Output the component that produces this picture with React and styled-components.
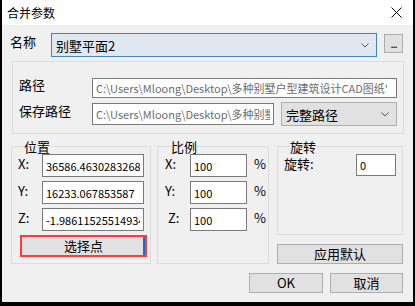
import React from "react";
import styled, { createGlobalStyle } from "styled-components";

const GlobalStyle = createGlobalStyle`
  body {
    margin: 0;
    background: #fff;
  }
  * {
    box-sizing: border-box;
  }
`;

const FONT = `"Noto Sans CJK SC", "Noto Sans", sans-serif`;

const Window = styled.div`
  width: 415px;
  height: 306px;
  border: solid #000;
  border-width: 0 2px 4px 2px;
  display: flex;
  flex-direction: column;
  font-family: ${FONT};
  color: #000;
`;

const TitleBar = styled.div`
  height: 25px;
  flex: none;
  background: #fff;
  display: flex;
  align-items: center;
  justify-content: space-between;
  padding: 0 11px 0 5px;
  font-size: 12px;
  line-height: 12px;
`;

const Body = styled.div`
  flex: 1;
  background: #f0f0f0;
  padding: 8px 10px 0 8px;
  display: flex;
  flex-direction: column;
`;

const NameRow = styled.div`
  display: flex;
  align-items: flex-start;
  height: 24px;
`;

const Label = styled.div`
  width: ${(p) => p.$w || 24}px;
  flex: none;
  font-size: 13px;
  line-height: 13px;
  margin-top: ${(p) => p.$top || 0}px;
  padding-left: ${(p) => p.$indent || 0}px;
  white-space: nowrap;
`;

const Combo = styled.div`
  width: ${(p) => p.$w}px;
  height: 24px;
  flex: none;
  display: flex;
  align-items: center;
  justify-content: space-between;
  padding: 0 7px 0 4px;
  font-size: 13px;
  background: ${(p) => (p.$active ? "#e1e8ef" : "#e1e1e1")};
  border: 1px solid ${(p) => (p.$active ? "#3c86c6" : "#adadad")};
`;

const DotsButton = styled.div`
  width: 19px;
  height: 19px;
  margin: 1px 0 0 7px;
  border: 1px solid #adadad;
  background: #e1e1e1;
  font-size: 11px;
  line-height: 17px;
  text-align: center;
  letter-spacing: -1px;
`;

const PathGroup = styled.div`
  height: 73px;
  margin: 4px -1px 0 2px;
  border: 1px solid #dcdcdc;
  padding: 16px 0 0 6px;
`;

const PathRow = styled.div`
  display: flex;
  align-items: flex-start;
  margin-top: ${(p) => p.$mt || 0}px;
`;

const Field = styled.input`
  width: ${(p) => p.$w}px;
  height: ${(p) => p.$h || 23}px;
  flex: none;
  margin: ${(p) => p.$mt || 0}px 0 0 0;
  border: 1px solid #7a7a7a;
  background: #fff;
  padding: 0 3px;
  font-family: ${FONT};
  font-size: 11px;
  color: ${(p) => (p.$muted ? "#6d6d6d" : "#000")};
  outline: none;
`;

const Lower = styled.div`
  display: flex;
  margin-top: 6px;
`;

const Group = styled.fieldset`
  margin: 0 0 0 ${(p) => p.$ml || 0}px;
  padding: 1px 0 0 ${(p) => p.$pl || 6}px;
  width: ${(p) => p.$w}px;
  height: ${(p) => p.$h}px;
  border: 1px solid #dcdcdc;
  min-width: 0;
  flex: none;
`;

const Legend = styled.legend`
  margin-left: 6px;
  padding: 0;
  font-size: 13px;
  line-height: 13px;
`;

const FieldRow = styled.div`
  display: flex;
  align-items: flex-start;
  height: 23px;
  margin-bottom: 4px;
`;

const Percent = styled.div`
  margin: 3px 0 0 7px;
  font-size: 13px;
  line-height: 13px;
`;

const PickButton = styled.div`
  width: 127px;
  height: 22px;
  margin: 1px 0 0 2px;
  border: 2px solid #ff3b3b;
  background: #e1e1e1;
  box-shadow: inset -2px 0 0 #0078d7;
  font-size: 13px;
  line-height: 17px;
  text-align: center;
`;

const RightCol = styled.div`
  display: flex;
  flex-direction: column;
  margin-left: 8px;
  width: 126px;
`;

const GreyButton = styled.div`
  width: ${(p) => p.$w}px;
  height: 20px;
  margin-top: ${(p) => p.$mt || 0}px;
  border: 1px solid #adadad;
  background: #e1e1e1;
  font-size: 13px;
  line-height: 17px;
  text-align: center;
`;

const Footer = styled.div`
  display: flex;
  justify-content: flex-end;
  gap: 7px;
  margin-top: 9px;
`;

const Chevron = () => (
  <svg width="8" height="5" viewBox="0 0 8 5">
    <polyline points="0.5,0.5 4,4 7.5,0.5" fill="none" stroke="#555" strokeWidth="1" />
  </svg>
);

const CloseIcon = () => (
  <svg width="11" height="11" viewBox="0 0 11 11">
    <path d="M0.5 0.5 L10.5 10.5 M10.5 0.5 L0.5 10.5" stroke="#000" strokeWidth="1" />
  </svg>
);

const pos = [
  ["X:", "36586.4630283268"],
  ["Y:", "16233.067853587"],
  ["Z:", "-1.98611525514934"],
];

export default function App() {
  return (
    <>
      <GlobalStyle />
      <Window>
        <TitleBar>
          <span>合并参数</span>
          <CloseIcon />
        </TitleBar>
        <Body>
          <NameRow>
            <Label $w={41} $top={2}>名称</Label>
            <Combo $w={326} $active>
              <span>别墅平面2</span>
              <Chevron />
            </Combo>
            <DotsButton>...</DotsButton>
          </NameRow>

          <PathGroup>
            <PathRow>
              <Label $w={73}>路径</Label>
              <Field
                $w={305}
                $h={20}
                $muted
                readOnly
                value="C:\Users\Mloong\Desktop\多种别墅户型建筑设计CAD图纸'"
              />
            </PathRow>
            <PathRow $mt={4}>
              <Label $w={73} $top={2}>保存路径</Label>
              <Field
                $w={182}
                $h={22}
                $mt={1}
                $muted
                readOnly
                value="C:\Users\Mloong\Desktop\多种别墅户型建筑设计"
              />
              <Combo $w={116} style={{ marginLeft: 7 }}>
                <span>完整路径</span>
                <Chevron />
              </Combo>
            </PathRow>
          </PathGroup>

          <Lower>
            <Group $ml={1} $w={140} $h={124}>
              <Legend>位置</Legend>
              {pos.map(([k, v]) => (
                <FieldRow key={k}>
                  <Label $w={24} $top={3}>{k}</Label>
                  <Field $w={102} readOnly value={v} />
                </FieldRow>
              ))}
              <PickButton>选择点</PickButton>
            </Group>

            <Group $ml={6} $w={112} $h={124} $pl={7}>
              <Legend>比例</Legend>
              {["X:", "Y:", "Z:"].map((k) => (
                <FieldRow key={k}>
                  <Label $w={25} $top={3} $indent={k === "Z:" ? 3 : 0}>{k}</Label>
                  <Field $w={57} readOnly value="100" />
                  <Percent>%</Percent>
                </FieldRow>
              ))}
            </Group>

            <RightCol>
              <Group $w={126} $h={95}>
                <Legend>旋转</Legend>
                <FieldRow>
                  <Label $w={72} $top={3}>旋转:</Label>
                  <Field $w={40} $h={22} readOnly value="0" />
                </FieldRow>
              </Group>
              <GreyButton $w={126} $mt={9}>应用默认</GreyButton>
            </RightCol>
          </Lower>

          <Footer>
            <GreyButton $w={74}>OK</GreyButton>
            <GreyButton $w={73}>取消</GreyButton>
          </Footer>
        </Body>
      </Window>
    </>
  );
}
